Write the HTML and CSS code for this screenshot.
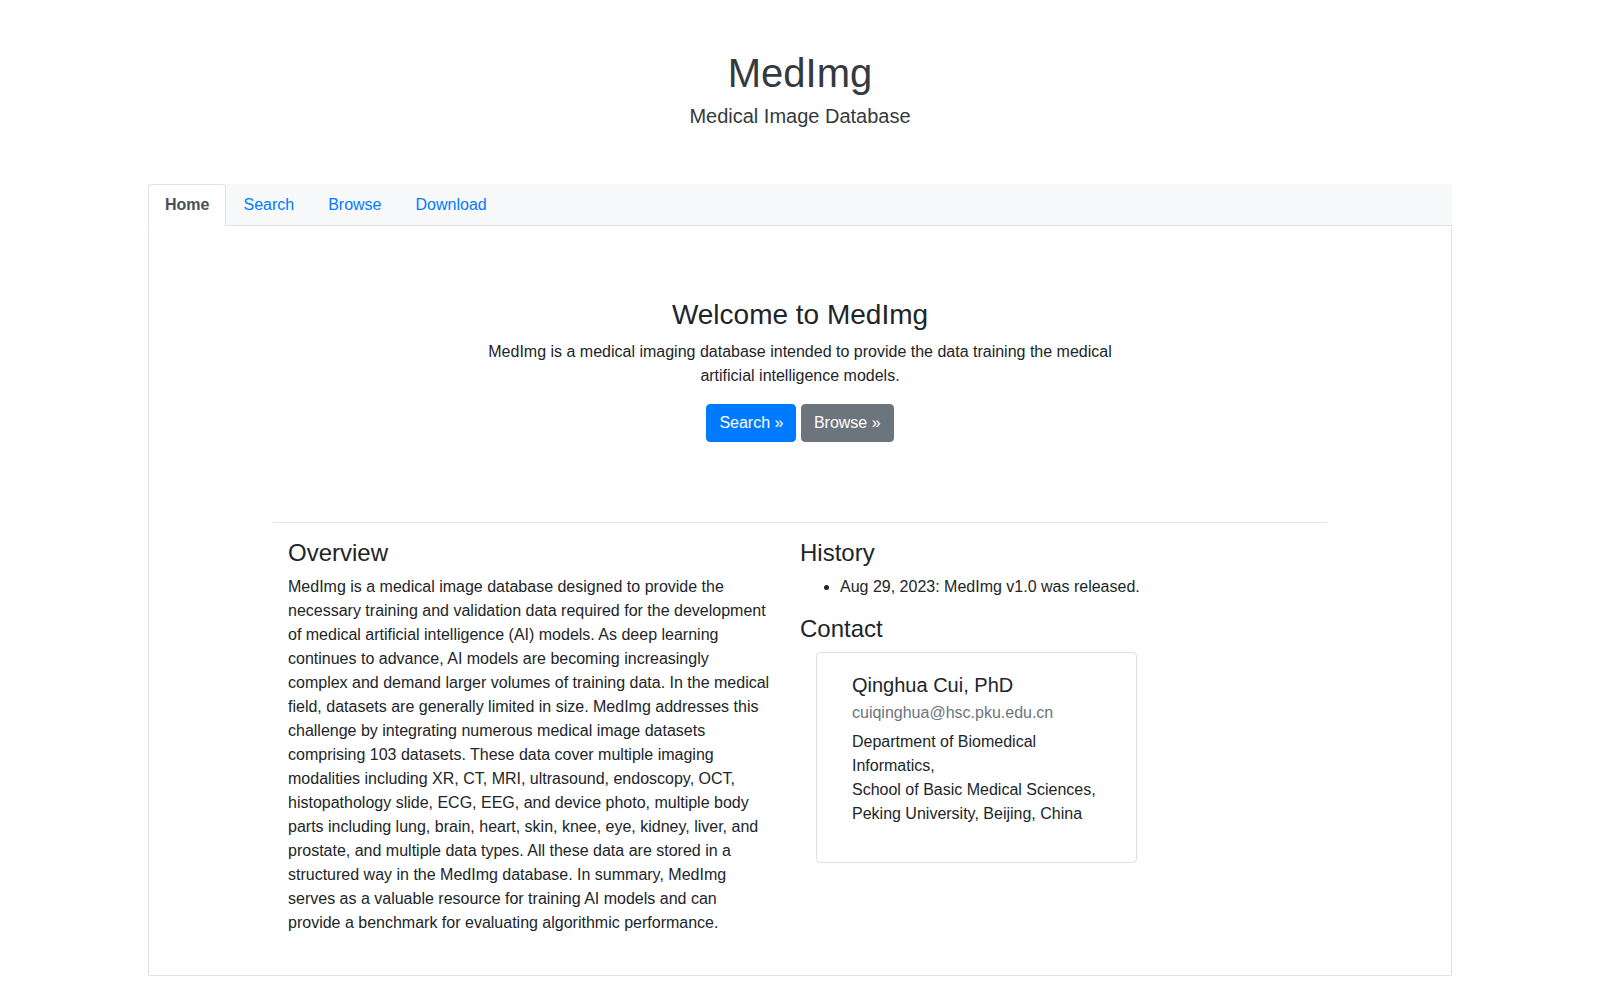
FILE: index.html
```html
<!DOCTYPE html>
<html lang="en">
<head>
    <meta charset="UTF-8">
    <meta name="viewport" content="width=device-width, initial-scale=1.0">
    <title>MedImg - Medical Image Database</title>
    <link rel="stylesheet" href="styles.css">
</head>
<body>
    <header class="site-header">
        <h1>MedImg</h1>
        <p class="lead">Medical Image Database</p>
    </header>

    <div class="main">
        <nav class="nav-tabs">
            <a class="nav-link active" href="#">Home</a>
            <a class="nav-link" href="#">Search</a>
            <a class="nav-link" href="#">Browse</a>
            <a class="nav-link" href="#">Download</a>
        </nav>

        <div class="tab-content">
            <section class="welcome">
                <h3>Welcome to MedImg</h3>
                <p>MedImg is a medical imaging database intended to provide the data training the medical artificial intelligence models.</p>
                <p class="actions">
                    <a class="btn btn-primary" href="#">Search &raquo;</a>
                    <a class="btn btn-secondary" href="#">Browse &raquo;</a>
                </p>
            </section>

            <section class="about">
                <div class="cols">
                    <div class="col">
                        <h4>Overview</h4>
                        <p>MedImg is a medical image database designed to provide the necessary training and validation data required for the development of medical artificial intelligence (AI) models. As deep learning continues to advance, AI models are becoming increasingly complex and demand larger volumes of training data. In the medical field, datasets are generally limited in size. MedImg addresses this challenge by integrating numerous medical image datasets comprising 103 datasets. These data cover multiple imaging modalities including XR, CT, MRI, ultrasound, endoscopy, OCT, histopathology slide, ECG, EEG, and device photo, multiple body parts including lung, brain, heart, skin, knee, eye, kidney, liver, and prostate, and multiple data types. All these data are stored in a structured way in the MedImg database. In summary, MedImg serves as a valuable resource for training AI models and can provide a benchmark for evaluating algorithmic performance.</p>
                    </div>
                    <div class="col">
                        <h4>History</h4>
                        <ul>
                            <li>Aug 29, 2023: MedImg v1.0 was released.</li>
                        </ul>
                        <h4>Contact</h4>
                        <div class="card">
                            <h5>Qinghua Cui, PhD</h5>
                            <div class="card-subtitle">cuiqinghua@hsc.pku.edu.cn</div>
                            <p>Department of Biomedical Informatics,<br>
                            School of Basic Medical Sciences,<br>
                            Peking University, Beijing, China</p>
                        </div>
                    </div>
                </div>
            </section>
        </div>
    </div>
</body>
</html>
```

FILE: styles.css
```css
body {
    margin: 0;
    font-family: "Liberation Sans", Arial, sans-serif;
    font-size: 16px;
    line-height: 1.5;
    color: #212529;
    background: #fff;
}
a {
    text-decoration: none;
}
.site-header {
    text-align: center;
    color: #343a40;
    padding-bottom: 53px;
}
.site-header h1 {
    margin: 49px 0 4px;
    font-size: 40px;
    font-weight: 400;
    line-height: 48px;
}
.site-header .lead {
    margin: 0;
    font-size: 20px;
    line-height: 30px;
}
.main {
    width: 1304px;
    margin: 0 auto;
}
.nav-tabs {
    display: flex;
    background: #f8f9fa;
    border-bottom: 1px solid #dee2e6;
}
.nav-link {
    display: block;
    padding: 8px 16px;
    margin-bottom: -1px;
    border: 1px solid transparent;
    border-radius: 4px 4px 0 0;
    color: #007bff;
}
.nav-link.active {
    color: #495057;
    font-weight: bold;
    background: #fff;
    border-color: #dee2e6 #dee2e6 #fff;
}
.tab-content {
    border: 1px solid #dee2e6;
    border-top: none;
    padding-top: 8px;
}
.welcome {
    max-width: 660px;
    margin: 0 auto;
    padding: 64px 0 64px;
    text-align: center;
}
.welcome h3 {
    margin: 0 0 8px;
    font-size: 28px;
    font-weight: 400;
    line-height: 1.2;
}
.welcome p {
    margin: 0 0 16px;
}
.btn {
    display: inline-block;
    padding: 6px 12px;
    border: 1px solid transparent;
    border-radius: 4px;
    color: #fff;
    font-size: 16px;
    line-height: 24px;
}
.btn-primary {
    background: #007bff;
    border-color: #007bff;
}
.btn-secondary {
    background: #6c757d;
    border-color: #6c757d;
}
.about {
    width: 1054px;
    margin: 0 auto;
    border-top: 1px solid rgba(0, 0, 0, 0.1);
    padding: 16px 0 24px;
}
.cols {
    display: grid;
    grid-template-columns: 482px 1fr;
    column-gap: 30px;
    padding: 0 15px;
}
.col h4 {
    margin: 0 0 8px;
    font-size: 24px;
    font-weight: 400;
    line-height: 1.2;
}
.col p {
    margin: 0 0 16px;
}
.col ul {
    margin: 0 0 16px;
    padding-left: 40px;
}
.card {
    width: 249px;
    margin-left: 16px;
    padding: 20px 35px;
    border: 1px solid rgba(0, 0, 0, 0.125);
    border-radius: 4px;
}
.card h5 {
    margin: 0 0 8px;
    font-size: 20px;
    font-weight: 400;
    line-height: 1.2;
}
.card-subtitle {
    margin-top: -4px;
    margin-bottom: 5px;
    color: #6c757d;
}
.card p {
    margin: 0 0 16px;
}
```
